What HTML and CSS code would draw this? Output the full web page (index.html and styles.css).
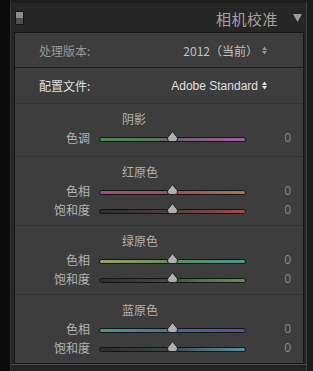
FILE: index.html
```html
<!DOCTYPE html>
<html lang="zh-CN">
<head>
<meta charset="utf-8">
<title>相机校准</title>
<link rel="stylesheet" href="styles.css">
</head>
<body>
<div class="frame">
  <div class="gutter"></div>
  <div class="main">
    <div class="header">
      <span class="toggle"></span>
      <span class="title">相机校准</span>
      <svg class="caret" width="9" height="8" viewBox="0 0 9 8"><path d="M0 0H9L4.5 8Z" fill="#9a9a9a"/></svg>
    </div>
    <div class="panel">
      <div class="prop prop-dim">
        <span class="prop-label">处理版本:</span>
        <span class="prop-value">2012（当前）<svg class="spin" width="5" height="9" viewBox="0 0 5 9"><path d="M0 4L2.5 0.5L5 4ZM0 5H5L2.5 8.5Z" fill="currentColor"/></svg></span>
      </div>
      <div class="prop prop-bright">
        <span class="prop-label">配置文件:</span>
        <span class="prop-value"><span class="latin">Adobe Standard</span><svg class="spin" width="5" height="9" viewBox="0 0 5 9"><path d="M0 4L2.5 0.5L5 4ZM0 5H5L2.5 8.5Z" fill="currentColor"/></svg></span>
      </div>

      <section class="group group-shadow">
        <div class="group-title">阴影</div>
        <div class="slider-row">
          <span class="s-label">色调</span>
          <div class="track t-tint"><svg class="thumb" width="11" height="11" viewBox="0 0 11 11"><path d="M5.5 0.5L9.6 5.6Q10.5 6.6 10.5 8Q10.5 10.5 8 10.5H3Q0.5 10.5 0.5 8Q0.5 6.6 1.4 5.6Z" fill="#b0b0b0" stroke="#1e1e1e"/></svg></div>
          <span class="s-val">0</span>
        </div>
      </section>

      <section class="group">
        <div class="group-title">红原色</div>
        <div class="slider-row">
          <span class="s-label">色相</span>
          <div class="track t-red-hue"><svg class="thumb" width="11" height="11" viewBox="0 0 11 11"><path d="M5.5 0.5L9.6 5.6Q10.5 6.6 10.5 8Q10.5 10.5 8 10.5H3Q0.5 10.5 0.5 8Q0.5 6.6 1.4 5.6Z" fill="#b0b0b0" stroke="#1e1e1e"/></svg></div>
          <span class="s-val">0</span>
        </div>
        <div class="slider-row">
          <span class="s-label">饱和度</span>
          <div class="track t-red-sat"><svg class="thumb" width="11" height="11" viewBox="0 0 11 11"><path d="M5.5 0.5L9.6 5.6Q10.5 6.6 10.5 8Q10.5 10.5 8 10.5H3Q0.5 10.5 0.5 8Q0.5 6.6 1.4 5.6Z" fill="#b0b0b0" stroke="#1e1e1e"/></svg></div>
          <span class="s-val">0</span>
        </div>
      </section>

      <section class="group">
        <div class="group-title">绿原色</div>
        <div class="slider-row">
          <span class="s-label">色相</span>
          <div class="track t-green-hue"><svg class="thumb" width="11" height="11" viewBox="0 0 11 11"><path d="M5.5 0.5L9.6 5.6Q10.5 6.6 10.5 8Q10.5 10.5 8 10.5H3Q0.5 10.5 0.5 8Q0.5 6.6 1.4 5.6Z" fill="#b0b0b0" stroke="#1e1e1e"/></svg></div>
          <span class="s-val">0</span>
        </div>
        <div class="slider-row">
          <span class="s-label">饱和度</span>
          <div class="track t-green-sat"><svg class="thumb" width="11" height="11" viewBox="0 0 11 11"><path d="M5.5 0.5L9.6 5.6Q10.5 6.6 10.5 8Q10.5 10.5 8 10.5H3Q0.5 10.5 0.5 8Q0.5 6.6 1.4 5.6Z" fill="#b0b0b0" stroke="#1e1e1e"/></svg></div>
          <span class="s-val">0</span>
        </div>
      </section>

      <section class="group">
        <div class="group-title">蓝原色</div>
        <div class="slider-row">
          <span class="s-label">色相</span>
          <div class="track t-blue-hue"><svg class="thumb" width="11" height="11" viewBox="0 0 11 11"><path d="M5.5 0.5L9.6 5.6Q10.5 6.6 10.5 8Q10.5 10.5 8 10.5H3Q0.5 10.5 0.5 8Q0.5 6.6 1.4 5.6Z" fill="#b0b0b0" stroke="#1e1e1e"/></svg></div>
          <span class="s-val">0</span>
        </div>
        <div class="slider-row">
          <span class="s-label">饱和度</span>
          <div class="track t-blue-sat"><svg class="thumb" width="11" height="11" viewBox="0 0 11 11"><path d="M5.5 0.5L9.6 5.6Q10.5 6.6 10.5 8Q10.5 10.5 8 10.5H3Q0.5 10.5 0.5 8Q0.5 6.6 1.4 5.6Z" fill="#b0b0b0" stroke="#1e1e1e"/></svg></div>
          <span class="s-val">0</span>
        </div>
      </section>
    </div>
    <div class="foot"></div>
  </div>
  <div class="rstrip"></div>
</div>
</body>
</html>
```

FILE: styles.css
```css
html, body {
  margin: 0;
  padding: 0;
  background: #1b1b1b;
}

body {
  font-family: "Noto Sans CJK SC", "Noto Sans", sans-serif;
}

.frame {
  display: flex;
  width: 313px;
  height: 371px;
  overflow: hidden;
}

.gutter {
  flex: none;
  width: 10px;
  background: #0b0b0b;
  border-right: 1px solid #363636;
}

.main {
  flex: none;
  width: 295px;
  display: flex;
  flex-direction: column;
  background: #262626;
  border-top: 3px solid #1d1d1d;
  border-right: 1px solid #3c3c3c;
}

.rstrip {
  flex: 1;
  background: #1c1c1c;
}

/* header */
.header {
  height: 29px;
  display: flex;
  align-items: center;
  flex: none;
}

.toggle {
  margin-left: 4px;
  width: 7px;
  height: 12px;
  border: 1px solid #141414;
  background: linear-gradient(#8c8c8c 0 50%, #4e4e4e 50% 100%);
}

.title {
  margin-left: auto;
  font-size: 15px;
  line-height: 1;
  letter-spacing: 0.5px;
  color: #a2a2a2;
  margin-top: 2px;
}

.caret {
  margin-left: 15px;
  margin-right: 4px;
  display: block;
}

/* panel */
.panel {
  flex: none;
  margin-left: 3px;
  width: 290px;
  box-sizing: border-box;
  border: 1px solid #171717;
  background: #3d3d3d;
}

.foot {
  flex: 1;
  border-top: 1px solid #4a4a4a;
  background: #242424;
}

.prop {
  display: flex;
  align-items: center;
  justify-content: space-between;
  padding: 0 36px 0 24px;
  font-size: 12px;
}

.prop-dim {
  height: 34px;
  border-bottom: 1px solid #1c1c1c;
  color: #999999;
}

.prop-dim .prop-value {
  color: #c2c2c2;
}

.prop-dim .spin {
  color: #959595;
}

.prop-bright {
  height: 35px;
  color: #e0e0e0;
}

.prop-value {
  display: flex;
  align-items: center;
  gap: 4px;
}

.latin {
  font-family: "Liberation Sans", sans-serif;
  font-size: 12px;
}

.spin {
  display: block;
}

/* groups */
.group {
  border-top: 1px solid #323232;
  padding: 6px 0 6px;
}

.group-shadow {
  padding-bottom: 9px;
}

.group-title {
  height: 18px;
  line-height: 18px;
  padding-left: 107px;
  font-size: 12px;
  color: #b2b2b2;
}

.slider-row {
  height: 19px;
  display: flex;
  align-items: center;
  font-size: 12px;
}

.group .slider-row:first-of-type {
  margin-top: 1px;
}

.s-label {
  width: 75px;
  text-align: right;
  color: #b4b4b4;
}

.s-val {
  width: 45px;
  text-align: right;
  color: #878787;
  font-family: "Noto Sans", sans-serif;
}

.track {
  position: relative;
  margin-left: 9px;
  margin-top: 4px;
  width: 147px;
  height: 5px;
  box-sizing: border-box;
  border: 1px solid #141414;
  border-radius: 3px;
}

.thumb {
  position: absolute;
  left: 50%;
  top: -7px;
  margin-left: -5.5px;
  display: block;
}

.t-tint {
  background: linear-gradient(90deg, #4a8c52 0%, #5e7560 40%, #686868 50%, #7a6279 60%, #a25ca3 100%);
}

.t-red-hue {
  background: linear-gradient(90deg, #96507e 0%, #9c505e 45%, #a04e4e 55%, #a27a5a 100%);
}

.t-red-sat {
  background: linear-gradient(90deg, #2e2e2e 0%, #4a3c3c 45%, #744444 70%, #a24c4c 100%);
}

.t-green-hue {
  background: linear-gradient(90deg, #98a262 0%, #6e9058 45%, #569060 60%, #4a9690 100%);
}

.t-green-sat {
  background: linear-gradient(90deg, #2e2e2e 0%, #3e4a3c 45%, #527448 70%, #62924e 100%);
}

.t-blue-hue {
  background: linear-gradient(90deg, #4e968c 0%, #487892 45%, #4a6498 60%, #5e4e9c 100%);
}

.t-blue-sat {
  background: linear-gradient(90deg, #2e2e2e 0%, #3a4448 45%, #4a6c78 70%, #5290a0 100%);
}
```
